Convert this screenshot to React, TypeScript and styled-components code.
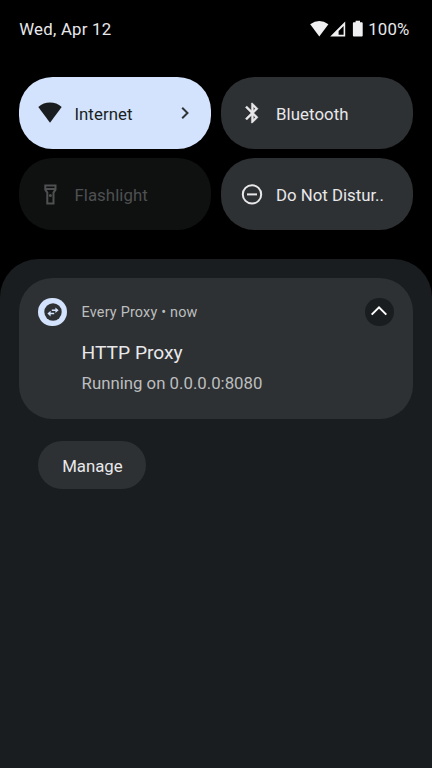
import React from "react";
import styled, { createGlobalStyle } from "styled-components";

const GlobalStyle = createGlobalStyle`
  *, *::before, *::after { box-sizing: border-box; }
  html, body { margin: 0; background: #000; }
  button { font: inherit; letter-spacing: inherit; border: 0; padding: 0; margin: 0; }
`;

const Screen = styled.main`
  width: 432px;
  height: 768px;
  display: flex;
  flex-direction: column;
  overflow: hidden;
  background: #000;
  color: #e8e8ea;
  font-family: Roboto, "Noto Sans", sans-serif;
  font-size: 16.8px;
  line-height: 20px;
`;

const StatusBar = styled.header`
  height: 76.8px;
  padding: 19px 22.4px 0 19.2px;
  display: flex;
  align-items: flex-start;
  justify-content: space-between;
`;

const DateText = styled.span`
  letter-spacing: 0.25px;
`;

const StatusIcons = styled.div`
  display: flex;
  align-items: flex-start;
`;

const StatusGlyphs = styled.svg`
  display: block;
  width: 56px;
  height: 20px;
  margin-right: 2px;
`;

const Battery = styled.span`
  letter-spacing: 0.2px;
`;

const Tiles = styled.section`
  padding: 0 19.2px;
  display: grid;
  grid-template-columns: 1fr 1fr;
  grid-auto-rows: 72px;
  gap: 9.6px;
`;

type TileState = "on" | "off" | "disabled";

const tileColors: Record<TileState, { bg: string; fg: string }> = {
  on: { bg: "#d3e3fd", fg: "#1a1d1f" },
  off: { bg: "#2e3133", fg: "#e8e8ea" },
  disabled: { bg: "#0f1111", fg: "#4e5051" },
};

const Tile = styled.button<{ $state: TileState }>`
  && {
    display: flex;
    align-items: center;
    padding: 0 19.2px;
    border-radius: 33.6px;
    background: ${(p) => tileColors[p.$state].bg};
    color: ${(p) => tileColors[p.$state].fg};
    text-align: left;
  }
`;

const TileIcon = styled.svg`
  flex: none;
  width: 24px;
  height: 24px;
  margin-right: 12px;
`;

const TileLabel = styled.span<{ $spacing: number }>`
  flex: 1;
  padding-top: 2px;
  white-space: nowrap;
  letter-spacing: ${(p) => p.$spacing}px;
`;

const TileChevron = styled.svg`
  width: 14px;
  height: 14px;
`;

const Shade = styled.section`
  flex: 1;
  margin-top: 28.8px;
  padding: 19.2px;
  border-radius: 38.4px 38.4px 0 0;
  background: #1a1d1f;
`;

const Card = styled.article`
  height: 140.6px;
  padding: 19.2px;
  border-radius: 33.6px;
  background: #2e3133;
  display: grid;
  grid-template-columns: 43.2px 1fr 28.8px;
  align-items: start;
`;

const Round = styled.span<{ $bg: string }>`
  width: 28.8px;
  height: 28.8px;
  border-radius: 50%;
  background: ${(p) => p.$bg};
  display: flex;
  align-items: center;
  justify-content: center;
`;

const Body = styled.div`
  display: flex;
  flex-direction: column;
`;

const AppLine = styled.span`
  margin-top: 6.4px;
  height: 18px;
  line-height: 18px;
  font-size: 14.4px;
  color: #bcbebf;
  letter-spacing: 0.2px;
`;

const Title = styled.h1`
  margin: 19.4px 0 0;
  font-size: 19.2px;
  line-height: 24px;
  font-weight: 400;
  color: #e8e8ea;
`;

const Detail = styled.p`
  margin: 8px 0 0;
  line-height: 20px;
  color: #bcbebf;
`;

const ManageButton = styled.button`
  && {
    display: block;
    width: 108px;
    height: 48px;
    margin: 22px 0 0 19.2px;
    padding-top: 3px;
    border-radius: 24px;
    background: #2e3133;
    color: #e8e8ea;
  }
`;

export default function App() {
  return (
    <>
      <GlobalStyle />
      <Screen>
        <StatusBar>
          <DateText>Wed, Apr 12</DateText>
          <StatusIcons>
            <StatusGlyphs viewBox="0 0 56 20" fill="#f0f0f2">
              <path d="M.2 5.2Q9.3 -1 18.4 5.2L9.3 17.4Z" />
              <path fillRule="evenodd" d="M35.2 2.4V17.4H20.2ZM33.6 7V15.8H28.6V12Z" />
              <path d="M45.6 1.8h4.4v1.5h1.8q.9 0 .9.9v12.4q0 .9-.9.9h-8q-.9 0-.9-.9v-12.4q0-.9.9-.9h1.8z" />
            </StatusGlyphs>
            <Battery>100%</Battery>
          </StatusIcons>
        </StatusBar>

        <Tiles>
          <Tile $state="on">
            <TileIcon viewBox="0 0 24 24" fill="currentColor">
              <path d="M.3 5.9Q5.4 1.6 12 1.6T23.7 5.9L12 21.8Z" />
            </TileIcon>
            <TileLabel $spacing={0.08}>Internet</TileLabel>
            <TileChevron viewBox="0 0 14 14" fill="none" stroke="#303437" strokeWidth="2">
              <path d="M4.2 1.7L9.5 7L4.2 12.3" />
            </TileChevron>
          </Tile>
          <Tile $state="off">
            <TileIcon viewBox="-0.4 0 24 24" fill="currentColor" stroke="currentColor" strokeWidth="0.4">
              <path d="M17.71 7.71L12 2h-1v7.59L6.41 5 5 6.41 10.59 12 5 17.59 6.41 19 11 14.41V22h1l5.71-5.71-4.3-4.29 4.3-4.29zM13 5.83l1.88 1.88L13 9.59V5.83zm1.88 10.46L13 18.17v-3.76l1.88 1.88z" />
            </TileIcon>
            <TileLabel $spacing={0.08}>Bluetooth</TileLabel>
          </Tile>
          <Tile $state="disabled">
            <TileIcon viewBox="-0.4 -0.5 24 24" fill="none" stroke="currentColor" strokeWidth="2">
              <path d="M6.9 2.9h10.2v4.2l-2 3v11H8.9v-11l-2-3zM6.9 6.4h10.2" />
              <circle cx="12" cy="13" r="1.5" fill="currentColor" stroke="none" />
            </TileIcon>
            <TileLabel $spacing={0.08}>Flashlight</TileLabel>
          </Tile>
          <Tile $state="off">
            <TileIcon viewBox="0 -0.4 24 24" fill="none" stroke="currentColor" strokeWidth="2">
              <circle cx="12" cy="12" r="9.2" />
              <path d="M7 12h10" />
            </TileIcon>
            <TileLabel $spacing={0}>Do Not Distur..</TileLabel>
          </Tile>
        </Tiles>

        <Shade>
          <Card>
            <Round $bg="#d3e3fd">
              <svg width="18" height="18" viewBox="0 0 18 18">
                <circle cx="9" cy="9" r="8.7" fill="#2e3133" />
                <g fill="none" stroke="#d3e3fd" strokeWidth="1.5">
                  <path d="M7.8 7.2h4.4M10.2 10.6H5.8" />
                </g>
                <path fill="#d3e3fd" d="M11.4 4.4L14.6 7.2L11.4 10ZM6.6 7.8L3.4 10.6L6.6 13.4Z" />
              </svg>
            </Round>
            <Body>
              <AppLine>Every Proxy • now</AppLine>
              <Title>HTTP Proxy</Title>
              <Detail>Running on 0.0.0.0:8080</Detail>
            </Body>
            <Round as="button" $bg="#1a1d1f" aria-label="Collapse">
              <svg width="18" height="18" viewBox="0 0 18 18" fill="none" stroke="#fff" strokeWidth="2">
                <path d="M1.7 11.6L9 4.3L16.3 11.6" />
              </svg>
            </Round>
          </Card>
          <ManageButton>Manage</ManageButton>
        </Shade>
      </Screen>
    </>
  );
}
